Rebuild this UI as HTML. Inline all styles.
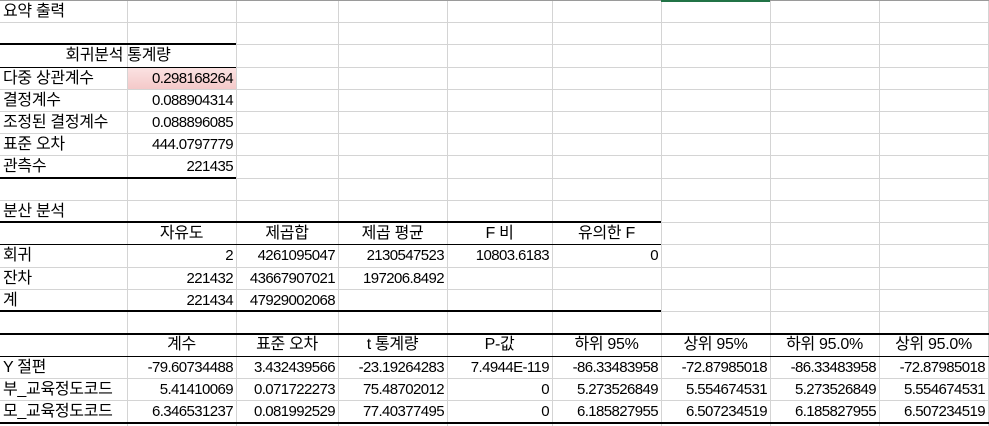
<!DOCTYPE html>
<html><head><meta charset="utf-8">
<style>
html,body{margin:0;padding:0;background:#fff;width:989px;height:426px;overflow:hidden}
body{font-family:"Liberation Sans","Noto Sans CJK KR",sans-serif;font-size:15px;color:#000;position:relative}
.g{position:absolute;background:#d4d4d4}
.t{position:absolute;background:#000;height:2px}
.c{position:absolute;height:22px;line-height:23px;white-space:nowrap;letter-spacing:-0.6px}
.k{font-size:16px;letter-spacing:-0.3px}
.r{text-align:right}
.m{text-align:center}
</style></head><body>
<div style="position:absolute;left:128px;top:67px;width:108px;height:22px;background:linear-gradient(#fbe3e3,#f4c9c9)"></div>
<div id="grid"></div>
<div style="position:absolute;left:0;top:0;width:989px;height:1px;background:#9a9a9a"></div>
<div style="position:absolute;left:661px;top:0;width:109px;height:2px;background:#217346"></div>
<script>
var xs=[0,127,236,338,447,552,661,770,879,988];
var ys=[0,22,44,67,89,111,133,155,178,200,222,244,267,289,311,333,356,378,400,422];
var h='';
xs.forEach(function(x){if(x>0)h+='<div class="g" style="left:'+x+'px;top:0;width:1px;height:426px"></div>';});
ys.forEach(function(y){if(y>0)h+='<div class="g" style="left:0;top:'+y+'px;width:989px;height:1px"></div>';});
function T(y,w){h+='<div class="t" style="left:0;top:'+(y-1)+'px;width:'+w+'px"></div>';}
T(44,236);T(178,236);T(222,661);T(311,661);T(334,989);T(423,989);
h+='<div style="position:absolute;left:0;top:67px;width:236px;height:1px;background:#000"></div>';
h+='<div style="position:absolute;left:0;top:244px;width:661px;height:1px;background:#000"></div>';
h+='<div style="position:absolute;left:0;top:356px;width:989px;height:1px;background:#000"></div>';
function K(t){return /[가-힣]/.test(t)?' k':'';}
function C(col,row,txt,cls){var x=xs[col],w=xs[col+1]-x,y=ys[row];
 h+='<div class="c '+(cls||'')+K(txt)+'" style="left:'+(x+3)+'px;width:'+(w-6)+'px;top:'+y+'px">'+txt+'</div>';}
C(0,0,'요약 출력');
h+='<div class="c m k" style="left:0;width:236px;top:44px">회귀분석 통계량</div>';
var s=[['다중 상관계수','0.298168264'],['결정계수','0.088904314'],['조정된 결정계수','0.088896085'],['표준 오차','444.0797779'],['관측수','221435']];
s.forEach(function(r,i){C(0,3+i,r[0]);C(1,3+i,r[1],'r');});
C(0,9,'분산 분석');
['','자유도','제곱합','제곱 평균','F 비','유의한 F'].forEach(function(t,i){if(t)C(i,10,t,'m');});
var a=[['회귀','2','4261095047','2130547523','10803.6183','0'],['잔차','221432','43667907021','197206.8492','',''],['계','221434','47929002068','','','']];
a.forEach(function(r,i){r.forEach(function(t,j){if(t)C(j,11+i,t,j?'r':'');});});
['','계수','표준 오차','t 통계량','P-값','하위 95%','상위 95%','하위 95.0%','상위 95.0%'].forEach(function(t,i){if(t)C(i,15,t,'m');});
var b=[['Y 절편','-79.60734488','3.432439566','-23.19264283','7.4944E-119','-86.33483958','-72.87985018','-86.33483958','-72.87985018'],
['부_교육정도코드','5.41410069','0.071722273','75.48702012','0','5.273526849','5.554674531','5.273526849','5.554674531'],
['모_교육정도코드','6.346531237','0.081992529','77.40377495','0','6.185827955','6.507234519','6.185827955','6.507234519']];
b.forEach(function(r,i){r.forEach(function(t,j){C(j,16+i,t,j?'r':'');});});
document.getElementById('grid').innerHTML=h;
</script>
</body></html>
